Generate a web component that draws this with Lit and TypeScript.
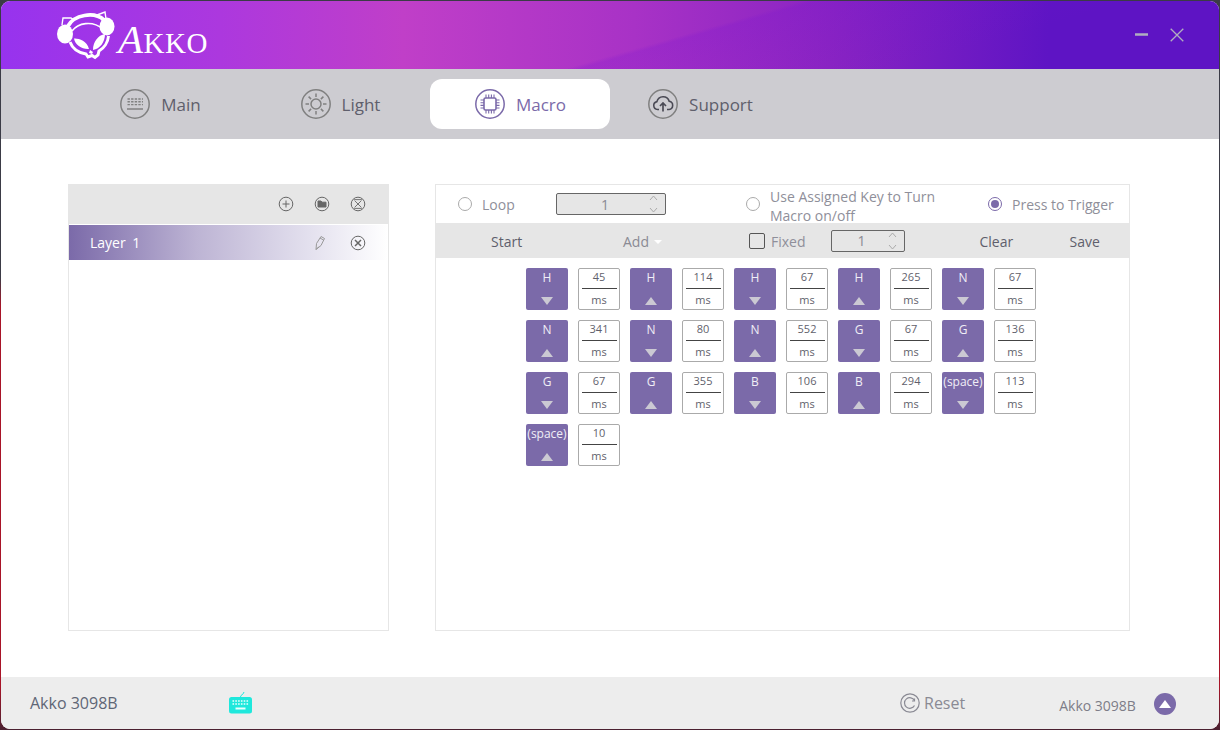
import { LitElement, html, css, svg } from "lit";
import { customElement } from "lit/decorators.js";

const steps: [string, boolean, number][] = [
  ["H", false, 45], ["H", true, 114], ["H", false, 67], ["H", true, 265], ["N", false, 67],
  ["N", true, 341], ["N", false, 80], ["N", true, 552], ["G", false, 67], ["G", true, 136],
  ["G", false, 67], ["G", true, 355], ["B", false, 106], ["B", true, 294], ["(space)", false, 113],
  ["(space)", true, 10],
];

const mainIcon = svg`<circle cx="15" cy="15" r="14.2"/><g stroke-width="1.4" stroke-dasharray="2.4 1.2"><path d="M7.500 10h15.500M7.500 12.800h15.500M7.500 15.600h15.500"/></g><path d="M7 20h16" stroke-width="1.7"/>`;
const lightIcon = svg`<circle cx="15" cy="15" r="14.2"/><circle cx="15" cy="15" r="5" stroke-width="1.5"/><path stroke-width="1.5" d="M15 4.500v3.500M15 22v3.500M4.500 15H8M22 15h3.500M7.600 7.600l2.500 2.500M19.900 19.900l2.500 2.500M7.600 22.400l2.500-2.500M19.900 10.100l2.500-2.500"/>`;
const macroIcon = svg`<circle cx="15" cy="15" r="14.2"/><rect x="9" y="9" width="12" height="12" rx="1.500" stroke-width="1.600"/><path stroke-width="1.100" d="M11 5.500V9M13.700 5.500V9M16.400 5.500V9M19 5.500V9M11 21v3.500M13.700 21v3.500M16.400 21v3.500M19 21v3.500M5.500 11H9M5.500 13.700H9M5.500 16.400H9M5.500 19H9M21 11h3.500M21 13.700h3.500M21 16.400h3.500M21 19h3.500"/>`;
const supportIcon = svg`<circle cx="15" cy="15" r="14.2"/><path stroke="#4a4a55" stroke-width="1.600" d="M11 20.500H9.500a4 4 0 0 1-.6-7.900 6.400 6.400 0 0 1 12.300-.4 4.200 4.200 0 0 1-.2 8.300H19"/><path stroke="#4a4a55" stroke-width="1.700" d="M15 22.500v-8M12 17l3-3 3 3"/>`;

const circleX = svg`<svg class="tool" width="16" height="16" viewBox="0 0 16 16"><circle cx="8" cy="8" r="6.800"/><path d="M4.600 4.600l6.800 6.800M11.400 4.600l-6.800 6.800M4.200 3.600h7.600M4.200 12.400h7.600" stroke-width=".9"/></svg>`;
const circleX2 = svg`<svg class="tool" width="16" height="16" viewBox="0 0 16 16"><circle cx="8" cy="8" r="6.800"/><path d="M5 5l6 6M11 5l-6 6" stroke-width="1.500"/></svg>`;
const up = svg`<svg class="chev" width="9" height="6" viewBox="0 0 9 6"><path d="M1 5l3.500-4L8 5"/></svg>`;
const down = svg`<svg class="chev" width="9" height="6" viewBox="0 0 9 6"><path d="M1 1l3.500 4L8 1"/></svg>`;

@customElement("app-root")
export class AppRoot extends LitElement {
  static styles = css`
    :host {
      display: block; box-sizing: border-box; width: 1220px; height: 730px; padding: 1px;
      background: linear-gradient(180deg, #3b3b46 0%, #3b3b46 38%, #a81428 42%, #a81428 94%, #4a2030 100%);
      font-family: "Open Sans", "Noto Sans", sans-serif; overflow: hidden;
    }
    * { box-sizing: border-box; }
    .win { width: 1218px; height: 728px; border-radius: 9px; overflow: hidden; display: flex; flex-direction: column; background: #fff; }

    .head {
      height: 68px; flex: none; display: flex; align-items: center; padding: 0 35px 0 54px;
      background:
        linear-gradient(164deg, rgba(255,255,255,0) 55%, rgba(120,20,210,.22) 56%, rgba(120,20,210,0) 78%),
        linear-gradient(90deg, #9733ee 0%, #ac38de 18%, #c03fc8 33%, #a832c6 52%, #8a24c2 68%, #5e14c4 86%, #5e14c4 100%);
    }
    .logo { display: flex; align-items: flex-end; flex: none; }
    .logo svg { display: block; }
    .brand { font-family: "Liberation Serif", serif; color: #fff; font-size: 41px; line-height: 44px; font-variant: small-caps; letter-spacing: .5px; margin-left: 1px; margin-bottom: 1px; font-style: normal; }
    .brand i { font-style: italic; }
    .winbtns { margin-left: auto; display: flex; align-items: center; gap: 21px; margin-top: -1px; }
    .winbtns svg { display: block; stroke: #b0aec0; fill: none; }

    .nav { height: 70px; flex: none; background: #cdccd1; display: flex; align-items: center; padding-left: 69px; }
    .tab { width: 180px; height: 50px; border-radius: 12px; display: flex; align-items: center; justify-content: center; gap: 11px; padding-left: 1px; color: #5f5f6c; font-size: 17px; }
    .tab svg { fill: none; stroke: #808080; stroke-width: 1.5; display: block; }
    .tab.on { background: #fff; color: #7b6aa9; }
    .tab.on svg { stroke: #7b6aa9; }

    .body { flex: 1; display: flex; gap: 46px; padding: 45px 89px 46px 67px; min-height: 0; }
    .left { width: 321px; border: 1px solid #e6e6e6; }
    .lhead { height: 40px; margin: -1px -1px 0; background: #e6e6e6; display: flex; align-items: center; justify-content: flex-end; gap: 20px; padding-right: 23.5px; }
    .tool { fill: none; stroke: #666; stroke-width: 1; display: block; }
    .layer { height: 35px; display: flex; align-items: center; padding: 0 22px 0 21px; color: #fff; font-size: 14px; word-spacing: 3px; background: linear-gradient(90deg, #7b6aa9 0%, #bdb4d4 40%, #e3e0ee 75%, #fff 100%); margin-top: 1px; }
    .layer .pen { margin-left: auto; margin-right: 24px; fill: none; stroke: #999; stroke-width: 1; display: block; }

    .right { flex: 1; border: 1px solid #e6e6e6; }
    .opts { height: 38px; display: flex; align-items: center; font-size: 14px; color: #8f8f9a; }
    .radio { width: 14px; height: 14px; border-radius: 50%; border: 1px solid #aaa; flex: none; display: flex; align-items: center; justify-content: center; }
    .radio.on { border-color: #7b6aa9; }
    .radio.on::after { content: ""; width: 8px; height: 8px; border-radius: 50%; background: #7b6aa9; }
    .opt { display: flex; align-items: center; gap: 10px; }
    .o1 { margin-left: 22px; width: 98px; }
    .o2 { width: 190px; }
    .o3 { width: 242px; line-height: 19px; }
    .wrap { width: 180px; padding-top: 3px; }
    .spin { height: 22px; border: 1px solid #666; border-radius: 2px; display: flex; align-items: center; color: #8a8a94; font-size: 14px; }
    .s1 { width: 110px; background: #e6e6e6; padding-left: 44px; }
    .s2 { width: 74px; padding-left: 26px; margin-left: 25px; }
    .arrows { margin-left: auto; margin-right: 7px; display: flex; flex-direction: column; gap: 6px; }
    .chev { fill: none; stroke: #aaa; stroke-width: 1; display: block; }

    .bar { height: 35px; background: #e6e6e6; display: flex; align-items: center; font-size: 14px; color: #5f5f6c; margin: 0 -1px; padding-left: 1px; }
    .lbl { padding-top: 2px; }
    .start { margin-left: 55px; width: 132px; }
    .add { width: 126px; color: #8a8a94; display: flex; align-items: center; gap: 5px; }
    .caret { width: 0; height: 0; border: 4px solid transparent; border-top: 4px solid #fff; border-bottom: 0; }
    .check { width: 16px; height: 16px; border: 1px solid #555; border-radius: 2px; flex: none; }
    .fixed { color: #8f8f9a; margin-left: 6px; }
    .clear { margin-left: 75px; width: 90px; }

    .grid { display: grid; grid-template-columns: repeat(10, 42px); gap: 10px; padding: 10px 0 0 90px; }
    .key { height: 42px; border-radius: 2px; background: #7b6aa9; color: #f0eef6; font-size: 12px; display: flex; flex-direction: column; align-items: center; justify-content: space-between; padding: 2px 0 5px; line-height: 16px; white-space: nowrap; }
    .tri { width: 0; height: 0; border-left: 6px solid transparent; border-right: 6px solid transparent; }
    .tri.u { border-bottom: 8px solid #cbc9d3; }
    .tri.d { border-top: 8px solid #cbc9d3; }
    .delay { height: 42px; border: 1px solid #aaa; border-radius: 2px; background: #fff; color: #5f5f6c; font-size: 11px; line-height: 16px; display: flex; flex-direction: column; align-items: center; }
    .delay b { font-weight: 400; width: 35px; text-align: center; height: 20px; border-bottom: 1px solid #444; }
    .delay span { margin-top: 3px; }

    .foot { height: 52px; flex: none; background: #ededed; display: flex; align-items: center; color: #5f6676; font-size: 16px; }
    .dev { margin-left: 29px; width: 199px; }
    .kb { display: block; margin-top: -1px; }
    .reset { margin-left: 648px; display: flex; align-items: center; gap: 4px; color: #8a8a94; }
    .reset svg { fill: none; stroke: #8a8a94; stroke-width: 1.2; display: block; }
    .dev2 { margin-left: 94px; font-size: 14px; color: #7d7d88; margin-top: 4px; }
    .up { width: 22px; height: 22px; border-radius: 50%; background: #7b6aa9; margin-left: 18px; display: flex; align-items: center; justify-content: center; margin-top: 2px; }
    .up::after { content: ""; border-left: 6px solid transparent; border-right: 6px solid transparent; border-bottom: 8px solid #fff; margin-top: -1px; }
  `;

  private tab(label: string, icon: unknown, on = false) {
    return html`<div class="tab ${on ? "on" : ""}"><svg width="30" height="30" viewBox="0 0 30 30">${icon}</svg>${label}</div>`;
  }

  render() {
    return html`<div class="win">
      <div class="head">
        <div class="logo">
          <svg width="62" height="54" viewBox="55 8 62 54">
            <g fill="#fff">
              <ellipse cx="65" cy="34" rx="8" ry="9.500"/>
              <ellipse cx="107" cy="26.500" rx="7.500" ry="9"/>
              <path d="M74 38.500c4-.5 13 2 15 10.500-7 .5-14-4-15-10.500zM105 34c0 8-5 15-12 16 0-8 5-15 12-16z"/>
              <path d="M90 50l3 2-1 2-3-1z"/>
            </g>
            <g fill="none" stroke="#fff">
              <path stroke-width="3.800" d="M68 26C74 15 94 11 104 20"/>
              <path stroke-width="1.600" d="M72 31C78 23 92 20 103 29"/>
              <path stroke-width="3" d="M70 42c3 8 10 11 16 12l2 3 4-1.500 3 2 3-2.500 1-4c5-3 9-9 9.500-15"/>
              <path stroke-width="1.400" d="M62 25l1-7h8l3 2M97 15l8-3 1 7"/>
            </g>
          </svg>
          <span class="brand"><i>A</i>kko</span>
        </div>
        <div class="winbtns">
          <svg width="14" height="3" viewBox="0 0 14 3"><path d="M0 1.500h13" stroke-width="2.600"/></svg>
          <svg width="14" height="14" viewBox="0 0 14 14"><path d="M.7.7l12.600 12.600M13.300.7L.7 13.300" stroke-width="1.300"/></svg>
        </div>
      </div>

      <div class="nav">
        ${this.tab("Main", mainIcon)}
        ${this.tab("Light", lightIcon)}
        ${this.tab("Macro", macroIcon, true)}
        ${this.tab("Support", supportIcon)}
      </div>

      <div class="body">
        <div class="left">
          <div class="lhead">
            <svg class="tool" width="16" height="16" viewBox="0 0 16 16"><circle cx="8" cy="8" r="6.800"/><path d="M8 4.500v7M4.500 8h7"/></svg>
            <svg class="tool" width="16" height="16" viewBox="0 0 16 16"><circle cx="8" cy="8" r="6.800"/><path d="M4 5h3l1 1.200h4V11H4z" fill="#666"/></svg>
            ${circleX}
          </div>
          <div class="layer">
            <span>Layer 1</span>
            <svg class="pen" width="12" height="16" viewBox="0 0 12 16"><path d="M2 14.500l.5-6L7 1.500l3.500 2L7 10.500zM2 14.500l3-3M6 3l3.500 2"/></svg>
            ${circleX2}
          </div>
        </div>

        <div class="right">
          <div class="opts">
            <div class="opt o1"><span class="radio"></span><span>Loop</span></div>
            <div class="o2"><div class="spin s1">1<div class="arrows">${up}${down}</div></div></div>
            <div class="opt o3"><span class="radio"></span><span class="wrap">Use Assigned Key to Turn Macro on/off</span></div>
            <div class="opt"><span class="radio on"></span><span>Press to Trigger</span></div>
          </div>
          <div class="bar">
            <span class="lbl start">Start</span>
            <span class="lbl add">Add<i class="caret"></i></span>
            <span class="check"></span>
            <span class="lbl fixed">Fixed</span>
            <div class="spin s2">1<div class="arrows">${up}${down}</div></div>
            <span class="lbl clear">Clear</span>
            <span class="lbl">Save</span>
          </div>
          <div class="grid">
            ${steps.map(([k, isUp, ms]) => html`
              <div class="key"><span>${k}</span><i class="tri ${isUp ? "u" : "d"}"></i></div>
              <div class="delay"><b>${ms}</b><span>ms</span></div>`)}
          </div>
        </div>
      </div>

      <div class="foot">
        <span class="dev">Akko 3098B</span>
        <svg class="kb" width="23" height="23" viewBox="0 0 23 23">
          <path d="M11.500 6c0-2.500 3-2 3.500-5" fill="none" stroke="#1fe8dc" stroke-width="1"/>
          <rect x="0" y="6" width="23" height="16.500" rx="2.500" fill="#1fe8dc"/>
          <g stroke="#eafffd" stroke-width="1.400" stroke-dasharray="1.600 1.200" fill="none"><path d="M3.500 10h16M3.500 13h16"/></g>
          <rect x="6.500" y="16.500" width="10" height="2" fill="#eafffd"/>
        </svg>
        <div class="reset">
          <svg width="20" height="20" viewBox="0 0 20 20"><circle cx="10" cy="10" r="9.200"/><path d="M14.500 7.500A5.300 5.300 0 1 0 14.500 12.500M14.500 5.500v2.500H12"/></svg>
          <span>Reset</span>
        </div>
        <span class="dev2">Akko 3098B</span>
        <div class="up"></div>
      </div>
    </div>`;
  }
}
